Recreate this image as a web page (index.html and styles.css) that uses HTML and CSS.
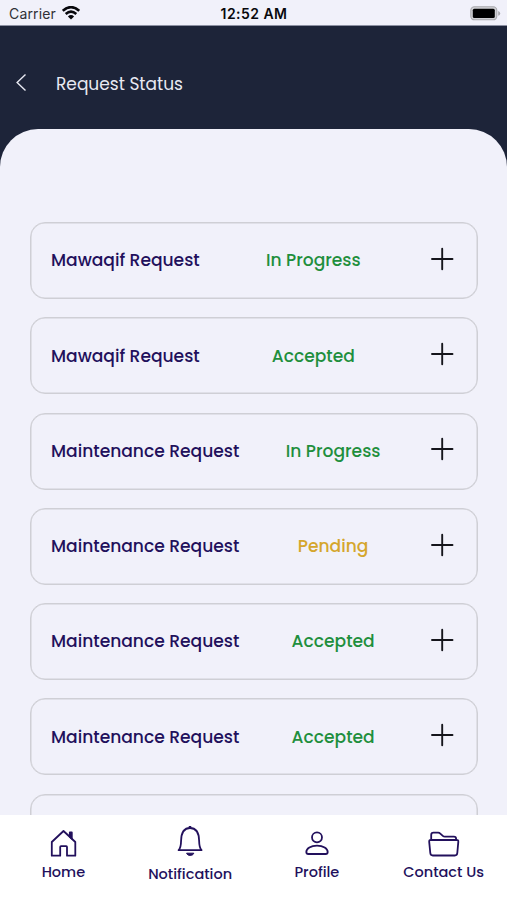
FILE: index.html
```
<!DOCTYPE html>
<html lang="en">
<head>
<meta charset="utf-8">
<title>Request Status</title>
<link rel="stylesheet" href="styles.css">
</head>
<body>
<div class="app">
  <div class="statusbar">
    <div class="carrier"><span class="carrier-name">Carrier</span>
      <svg width="18" height="14" viewBox="0 0 18 14" fill="none" stroke="#08080c" stroke-width="2.5"><path d="M.8 4.8Q9-2.6 17.2 4.8M3.7 8Q9 3.2 14.3 8"/><path d="M5.9 10.4Q9 7.8 12.1 10.4L9 13.5Z" fill="#08080c" stroke="none"/></svg>
    </div>
    <div class="time">12:52 AM</div>
    <svg class="battery" width="31" height="15" viewBox="0 0 31 15"><rect x=".8" y=".8" width="26" height="13" rx="3.6" fill="#d0d0d4" stroke="#a9a9ad" stroke-width="1.1"/><rect x="2.8" y="2.7" width="22" height="9.3" rx="1.5" fill="#000"/><path d="M28.2 5v4.8q2-.7 2-2.4t-2-2.4Z" fill="#a9a9ad"/></svg>
  </div>
  <header class="header">
    <svg width="12" height="20" viewBox="0 0 12 20" fill="none" stroke="#e8e9f2" stroke-width="1.4"><path d="M10.500 1.500 2.100 9.500 10.500 17.500"/></svg>
    <h1 class="title">Request Status</h1>
  </header>
  <main class="sheet">
    <div class="card"><span class="name">Mawaqif Request</span><span class="state">In Progress</span><svg class="plus" viewBox="0 0 30 30"><path d="M5 15h20.500M15.200 4.800v20.400"/></svg></div>
    <div class="card"><span class="name">Mawaqif Request</span><span class="state">Accepted</span><svg class="plus" viewBox="0 0 30 30"><path d="M5 15h20.500M15.200 4.800v20.400"/></svg></div>
    <div class="card"><span class="name">Maintenance Request</span><span class="state">In Progress</span><svg class="plus" viewBox="0 0 30 30"><path d="M5 15h20.500M15.200 4.800v20.400"/></svg></div>
    <div class="card"><span class="name">Maintenance Request</span><span class="state pending">Pending</span><svg class="plus" viewBox="0 0 30 30"><path d="M5 15h20.500M15.200 4.800v20.400"/></svg></div>
    <div class="card"><span class="name">Maintenance Request</span><span class="state">Accepted</span><svg class="plus" viewBox="0 0 30 30"><path d="M5 15h20.500M15.200 4.800v20.400"/></svg></div>
    <div class="card"><span class="name">Maintenance Request</span><span class="state">Accepted</span><svg class="plus" viewBox="0 0 30 30"><path d="M5 15h20.500M15.200 4.800v20.400"/></svg></div>
    <div class="card"></div>
  </main>
  <nav class="tabs">
    <a class="tab"><svg width="28" height="30" viewBox="0 0 28 30"><path d="M2.800 15 14.500 4 26.300 15V28.700h-8.300v-8.700q0-.8-.8-.8h-5.200q-.8 0-.8.8v8.700H2.800Z"/><path d="M20.800 5.500h2v6l-2-2Z" fill="#22105c"/></svg><span>Home</span></a>
    <a class="tab notice"><svg width="28" height="32" viewBox="0 0 28 32"><path d="M2.600 25.200c2-1.800 2.400-5.500 2.500-9.700C5.300 7.700 8 3 14 3s8.900 4.700 9.100 12.500c.1 4.200.5 7.900 2.500 9.700Z"/><path d="M13 2.500V1.500h2v1M10.600 28.200h7.200c-.9 3-6.300 3-7.200 0Z" fill="#22105c" stroke-width="1"/></svg><span>Notification</span></a>
    <a class="tab"><svg width="28" height="30" viewBox="0 0 28 30"><circle cx="14" cy="10.300" r="5"/><path d="M3.300 25c0-3.500 4.500-6.400 10.700-6.400s10.700 2.900 10.700 6.400c0 1.500-.6 2-2 2H5.300c-1.400 0-2-.5-2-2Z"/></svg><span>Profile</span></a>
    <a class="tab"><svg width="32" height="30" viewBox="0 0 32 30"><path d="M3.200 13V8q0-2.300 2.300-2.300h4.600q1.200 0 2.200.9l2.500 2.300q.9.800 2.100.8h9q2.200 0 2.200 2v1.300M2.700 13h26.100q1.700 0 1.500 1.800l-1 11.200q-.2 2.500-2.500 2.500H4.800q-2.300 0-2.500-2.500l-1.100-11.200q-.2-1.800 1.500-1.800Z"/></svg><span>Contact Us</span></a>
  </nav>
</div>
</body>
</html>
```
FILE: styles.css
```
* { box-sizing: border-box; }
body { margin: 0; font-family: Poppins, Inter, sans-serif; }
.app { height: 900px; display: flex; flex-direction: column; overflow: hidden; background: #1d2439; }
.statusbar { height: 26px; flex: none; background: #f1f1fa; border-bottom: 1px solid #8c90a2; display: grid; grid-template-columns: 1fr auto 1fr; align-items: center; padding: 1px 6px 0 9px; font-family: Inter, sans-serif; color: #08080c; }
.carrier { display: flex; align-items: center; gap: 6px; font-size: 14px; letter-spacing: .15px; color: #303036; }
.time { font-size: 14px; font-weight: 600; letter-spacing: .45px; margin-right: 2px; }
.battery { justify-self: end; }
.header { height: 102.600px; flex: none; display: flex; align-items: center; padding: 11px 0 0 15px; gap: 29px; }
.title { margin: 2px 0 0; font-size: 17px; font-weight: 400; color: #e8e9f2; }
.sheet { flex: 1; min-height: 0; overflow: hidden; background: #f1f1fa; border-radius: 38px 38px 0 0; padding: 93.400px 29.500px 0 30px; display: flex; flex-direction: column; gap: 18.300px; }
.card { flex: none; height: 77px; border: 1px solid #cfcfd5; box-shadow: inset 0 0 0 .5px #cfcfd5; border-radius: 15px; padding: 0 19.600px .5px 20px; display: flex; align-items: center; justify-content: space-between; font-size: 17.100px; font-weight: 500; white-space: nowrap; }
.name { color: #22105c; }
.state { color: #1f8f3d; }
.state.pending { color: #d5a62c; }
.plus { width: 30px; height: 30px; margin-top: -3px; fill: none; stroke: #15151b; stroke-width: 1.900; stroke-linecap: round; }
.tabs { height: 85px; flex: none; background: #fff; display: grid; grid-template-columns: repeat(4, 1fr); padding-top: 12px; }
.tab { display: flex; flex-direction: column; align-items: center; color: #22105c; font-size: 14.500px; font-weight: 500; line-height: 20px; gap: 5px; }
.tab svg { fill: none; stroke: #22105c; stroke-width: 1.800; stroke-linejoin: round; }
.notice { margin-top: -2px; gap: 7px; }
```
